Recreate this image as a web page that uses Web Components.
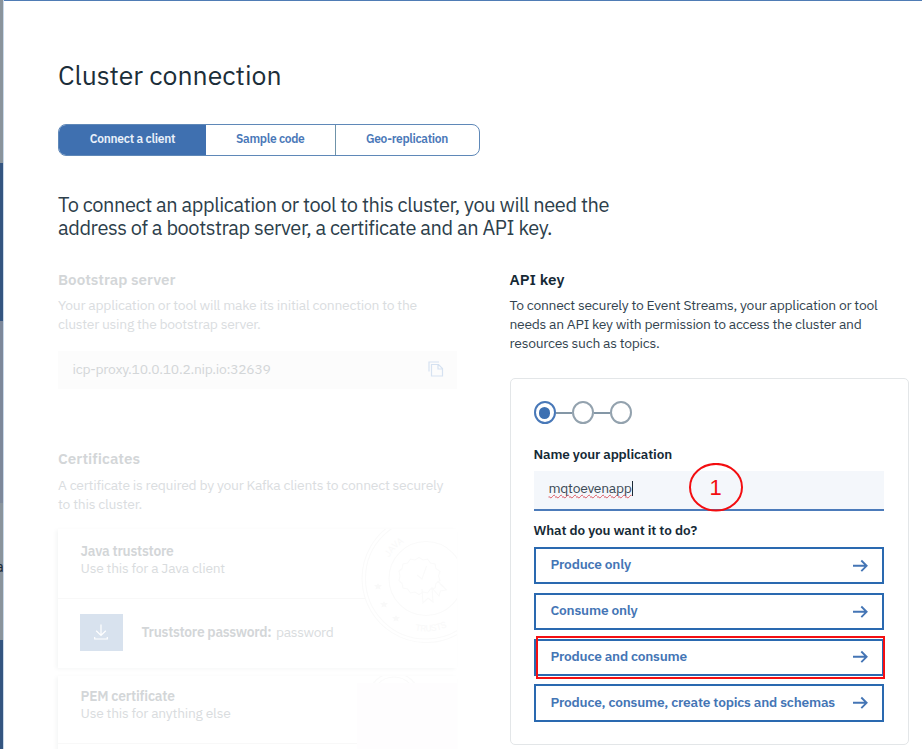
<!DOCTYPE html>
<html lang="en">
<head>
<meta charset="utf-8">
<title>Cluster connection</title>
<style>
html,body{margin:0;height:100%;overflow:hidden;background:#fff}
body{font-family:"IBM Plex Sans",Roboto,"Liberation Sans",sans-serif;color:#152935}
</style>
</head>
<body>
<cluster-page></cluster-page>
<script>
const define = (name, html, setup) => customElements.define(name, class extends HTMLElement {
  connectedCallback() {
    if (this.shadowRoot) return;
    const t = document.createElement('template');
    t.innerHTML = html;
    this.attachShadow({mode: 'open'}).append(t.content.cloneNode(true));
    if (setup) setup(this, this.shadowRoot);
  }
});

/* One line of text, tracked so that it fills the given width. */
define('fit-line', `<style>:host{display:block;white-space:nowrap;width:max-content}</style><span><slot></slot></span>`, (el, root) => {
  const s = root.querySelector('span');
  const fit = () => {
    s.style.letterSpacing = '0';
    const n = el.textContent.length, w = s.getBoundingClientRect().width;
    if (w) s.style.letterSpacing = ((+el.getAttribute('w') - w) / n) + 'px';
  };
  fit();
  requestAnimationFrame(fit);
});

define('side-strip', `<style>
:host{display:grid;grid-template-rows:163px 158px 182px 137px 1fr;width:3px;height:749px;overflow:hidden;border-right:1px solid #c9d9ea}
i{display:block;background:#8a949c}.b{background:#345580}.s{background:#7d889a}
.t{font:14px/14px Roboto,sans-serif;color:#1c2b3a;padding-top:57px;text-indent:-4px}
</style><i></i><i class="b"></i><i class="s"></i><i class="t">a</i><i class="b"></i>`);

define('tab-bar', `<style>
:host{display:grid;grid-template-columns:147px 129.5px 1fr;width:421.5px;height:32px;box-sizing:border-box;border:1px solid #5f88b8;border-radius:8px;overflow:hidden;font-weight:600;font-size:12px;line-height:28px;color:#4a78b8;background:#fff}
div{display:flex;justify-content:center}.on{background:#3f70b0;color:#e9f0fa}.m{border-right:1px solid #6f93a9}
</style><div class="on"><fit-line w="85.500">Connect a client</fit-line></div><div class="m"><fit-line w="68.500">Sample code</fit-line></div><div><fit-line w="82">Geo-replication</fit-line></div>`);

define('info-section', `<style>
:host{display:block;font-size:13.9px;line-height:19px;color:var(--body,#33444f)}
header{font-weight:600;font-size:15.2px;line-height:20px;margin-bottom:var(--gap,7.5px);color:var(--head,#152935)}
</style><header><slot name="title"></slot></header><slot></slot>`);

define('address-box', `<style>
:host{display:flex;align-items:center;justify-content:space-between;box-sizing:border-box;height:38px;margin-top:16.5px;padding:0 13.5px 1px 14.5px;background:#fcfcfc;color:#d3d6d8;font-size:13.9px}
svg{display:block}
</style><fit-line w="198">icp-proxy.10.0.10.2.nip.io:32639</fit-line>
<svg width="16" height="16" viewBox="0 0 16 16" fill="none" stroke="#d6e2f1" stroke-width="1.2"><path d="M11 1H1v9.500M3.500 3.500h7l4 4v7.500H3.500zM10 3.500v4.500h4.500"/></svg>`);

define('cert-card', `<style>
:host{display:block;box-sizing:border-box;height:139px;margin-top:var(--mt,15.5px);position:relative;overflow:hidden;background:#fff;font-size:13.8px;line-height:17px;color:#d9dcde;box-shadow:-2px 1px 4px #f5f6f6}
.top{box-sizing:border-box;height:var(--th,70px);padding:var(--pt,14px) 0 0 22.5px;border-bottom:1px solid #f8f8f8}
.top ::slotted([slot=name]){font-weight:600;color:#d3d6d8}
.low{display:flex;align-items:center;height:68px;padding-left:22px;gap:19px;box-sizing:border-box;padding-bottom:2px}
.art{position:absolute;right:0;top:0}
</style><div class="art"><slot name="art"></slot></div><div class="top"><slot name="name"></slot><slot></slot></div><div class="low"><slot name="row"></slot></div>`);

define('download-tile', `<style>
:host{display:grid;place-items:center;width:42.5px;height:37.5px;background:#d8e2ee}svg{display:block}
</style><svg width="14" height="16" viewBox="0 0 14 16" fill="none" stroke="#fff" stroke-width="1.2"><path d="M7 .5v11M2.2 6.8 7 11.5l4.8-4.7M.7 13v2h12.6v-2"/></svg>`);

define('java-seal', `<style>:host,svg{display:block}</style>
<svg width="96" height="114" viewBox="362 529 96 114"><g fill="none" stroke="#fafafa" stroke-width="1.1">
<path fill="#fff" d="M427 514.500a64 64 0 1 0 .1 0z"/><circle cx="427" cy="578.500" r="60.500"/><circle cx="427" cy="578.500" r="37"/>
<path d="M420 557.500l4 2.500 4.500-1 3 4 4.500 1 1 4.500 4 3-1.500 4.500 1.500 4.500-4 3-1 4.500-4.500 1-3 4-4.500-1-4 2.500-4-2.500-4.500 1-3-4-4.500-1-1-4.500-3-3 1-4.500-1-4.500 3-3 1-4.500 4.500-1 3-4 4.500 1zM418 575l5 4 4.500-13M423 589l1 14 5-5 5 4-1-15M433 588l7 8 1.500-5 6-1-9-9"/>
<path id="ja" stroke="none" d="M384.500 578.500a42.500 42.500 0 0 1 85 0"/><path id="tr" stroke="none" d="M374 578.500a53 53 0 0 0 106 0"/></g>
<g fill="#f9f9f9"><path d="M379 583l1 2 3 0-2 2 .5 2.500-2.500-1-2.500 1 .5-2.500-2-2 3 0zM385 601l1 2 3 0-2 2 .5 2.500-2.500-1-2.500 1 .5-2.500-2-2 3 0zM397 615l1 2 3 0-2 2 .5 2.500-2.500-1-2.500 1 .5-2.500-2-2 3 0z"/></g>
<g fill="#f9f9f9" font-family="Roboto,sans-serif" font-size="9"><text><textPath href="#ja" startOffset="22">JAVA</textPath></text><text><textPath href="#tr" startOffset="72">TRUSTS</textPath></text></g></svg>`);

define('pem-seal', `<style>:host,svg{display:block}</style>
<svg width="100" height="73" viewBox="358 676 100 73"><g fill="none" stroke="#fafafa" stroke-width="1.1"><circle cx="395" cy="699" r="26"/><circle cx="395" cy="699" r="22"/></g><path d="M358 683h100v66h-100z" fill="#fefdfe"/></svg>`);

define('step-dots', `<style>
:host{display:flex;align-items:center;height:22px}i{box-sizing:border-box;width:22px;height:23px;border:2px solid #93a2ae;border-radius:50%}
b{width:16px;height:2px;background:#8497a6}.on{border-color:#4878b8;display:grid;place-items:center}.on:before{content:"";width:11.500px;height:11.500px;border-radius:50%;background:#3d70b2}
</style><i class="on"></i><b></b><i></i><b></b><i></i>`);

define('name-field', `<style>
:host{display:flex;align-items:center;box-sizing:border-box;height:40px;margin-top:7.500px;padding:0 0 3px 15px;background:#f4f7fb;border-bottom:2px solid #4c7bba;font-size:13.9px;color:#3c4a56}
fit-line{text-decoration:underline wavy #dc5560 1px;text-decoration-skip-ink:none;text-underline-offset:1px}
i{width:1px;height:15px;background:#1b2a36}
</style><fit-line w="83">mqtoevenapp</fit-line><i></i>`);

define('action-button', `<style>
:host{display:flex;align-items:center;justify-content:space-between;box-sizing:border-box;height:37.500px;padding:0 14.500px 0 15px;border:2px solid #2a69b0;background:#fff;color:#4475b5;font-weight:600;font-size:13.7px;position:relative}
div{padding-bottom:1.500px}svg{display:block}
</style><div><slot></slot></div><svg width="16" height="14" viewBox="0 0 16 14" fill="none" stroke="#4475b5" stroke-width="1.900"><path d="M1 6.800h13.500M9.300 1.500 14.600 6.800l-5.300 5.300"/></svg><slot name="mark"></slot>`);

define('red-frame', `<style>:host{position:absolute;left:.5px;top:-5px;width:345px;height:39px;border:2px solid #f40f12}</style>`);
define('step-badge', `<style>:host{position:absolute;left:178px;top:84px;width:54px;height:49px}svg{display:block}</style>
<svg width="54" height="49"><ellipse cx="27" cy="24.200" rx="26" ry="23.300" fill="none" stroke="#f30d10" stroke-width="2"/><text x="20.500" y="32" font-family="Liberation Sans,Arial,sans-serif" font-size="22" fill="#f30d10">1</text></svg>`);

define('key-card', `<style>
:host{display:block;box-sizing:border-box;height:367px;margin-top:24.500px;padding:23px 23.500px 23px 23px;border:1px solid #e3e6e8;border-radius:5px;position:relative;font-size:13.5px;color:#152935}
.l{font-weight:600;line-height:18px}.a{margin-top:21.500px}.b{margin-top:10.500px}
nav{display:grid;gap:8.300px;margin-top:7.500px}
</style><step-dots></step-dots><fit-line class="l a" w="138.5">Name your application</fit-line><name-field></name-field>
<fit-line class="l b" w="163.500">What do you want it to do?</fit-line>
<nav><action-button><fit-line w="80.500">Produce only</fit-line></action-button><action-button><fit-line w="87">Consume only</fit-line></action-button><action-button><fit-line w="136.500">Produce and consume</fit-line><red-frame slot="mark"></red-frame></action-button><action-button><fit-line w="284.500">Produce, consume, create topics and schemas</fit-line></action-button></nav>
<step-badge></step-badge>`);

define('cluster-page', `<style>
:host{display:flex;height:749px;width:922px;overflow:hidden}
main{flex:1;box-sizing:border-box;border-top:1px solid #4f7cb5;padding:58px 13px 0 54px}
h1{font-weight:400;font-size:26.600px;line-height:32px;margin:0 0 33.200px;color:#1b2e39}
.intro{font-size:20px;line-height:23.500px;margin:36.600px 0 29.200px;color:#2d404b}
.cols{display:grid;grid-template-columns:399px 399px;gap:52.500px;align-items:start}
.dim{--body:#dadddf;--head:#d3d6d8}.cert{margin-top:59px;--gap:8px}
.second{--mt:7.500px;--pt:12.500px;--th:68px}.pw{font-weight:600;color:#d3d6d8}.p{margin-left:-14.500px}
</style><side-strip></side-strip><main>
<h1><fit-line w="223.500">Cluster connection</fit-line></h1><tab-bar></tab-bar>
<div class="intro"><fit-line w="551">To connect an application or tool to this cluster, you will need the</fit-line><fit-line w="494">address of a bootstrap server, a certificate and an API key.</fit-line></div>
<div class="cols"><div class="dim">
<info-section><fit-line slot="title" w="117.500">Bootstrap server</fit-line><fit-line w="359">Your application or tool will make its initial connection to the</fit-line><fit-line w="202.500">cluster using the bootstrap server.</fit-line><address-box></address-box></info-section>
<info-section class="cert"><fit-line slot="title" w="82">Certificates</fit-line><fit-line w="385">A certificate is required by your Kafka clients to connect securely</fit-line><fit-line w="84">to this cluster.</fit-line>
<cert-card><java-seal slot="art"></java-seal><fit-line slot="name" w="93">Java truststore</fit-line><fit-line w="144.500">Use this for a Java client</fit-line><download-tile slot="row"></download-tile><fit-line slot="row" class="pw" w="130">Truststore password:</fit-line><fit-line slot="row" class="p" w="57.500">password</fit-line></cert-card>
<cert-card class="second"><pem-seal slot="art"></pem-seal><fit-line slot="name" w="94">PEM certificate</fit-line><fit-line w="150">Use this for anything else</fit-line></cert-card></info-section>
</div><info-section><fit-line slot="title" w="55">API key</fit-line><fit-line w="368">To connect securely to Event Streams, your application or tool</fit-line><fit-line w="352">needs an API key with permission to access the cluster and</fit-line><fit-line w="150">resources such as topics.</fit-line><key-card></key-card></info-section></div>
</main>`);
</script>
</body>
</html>
